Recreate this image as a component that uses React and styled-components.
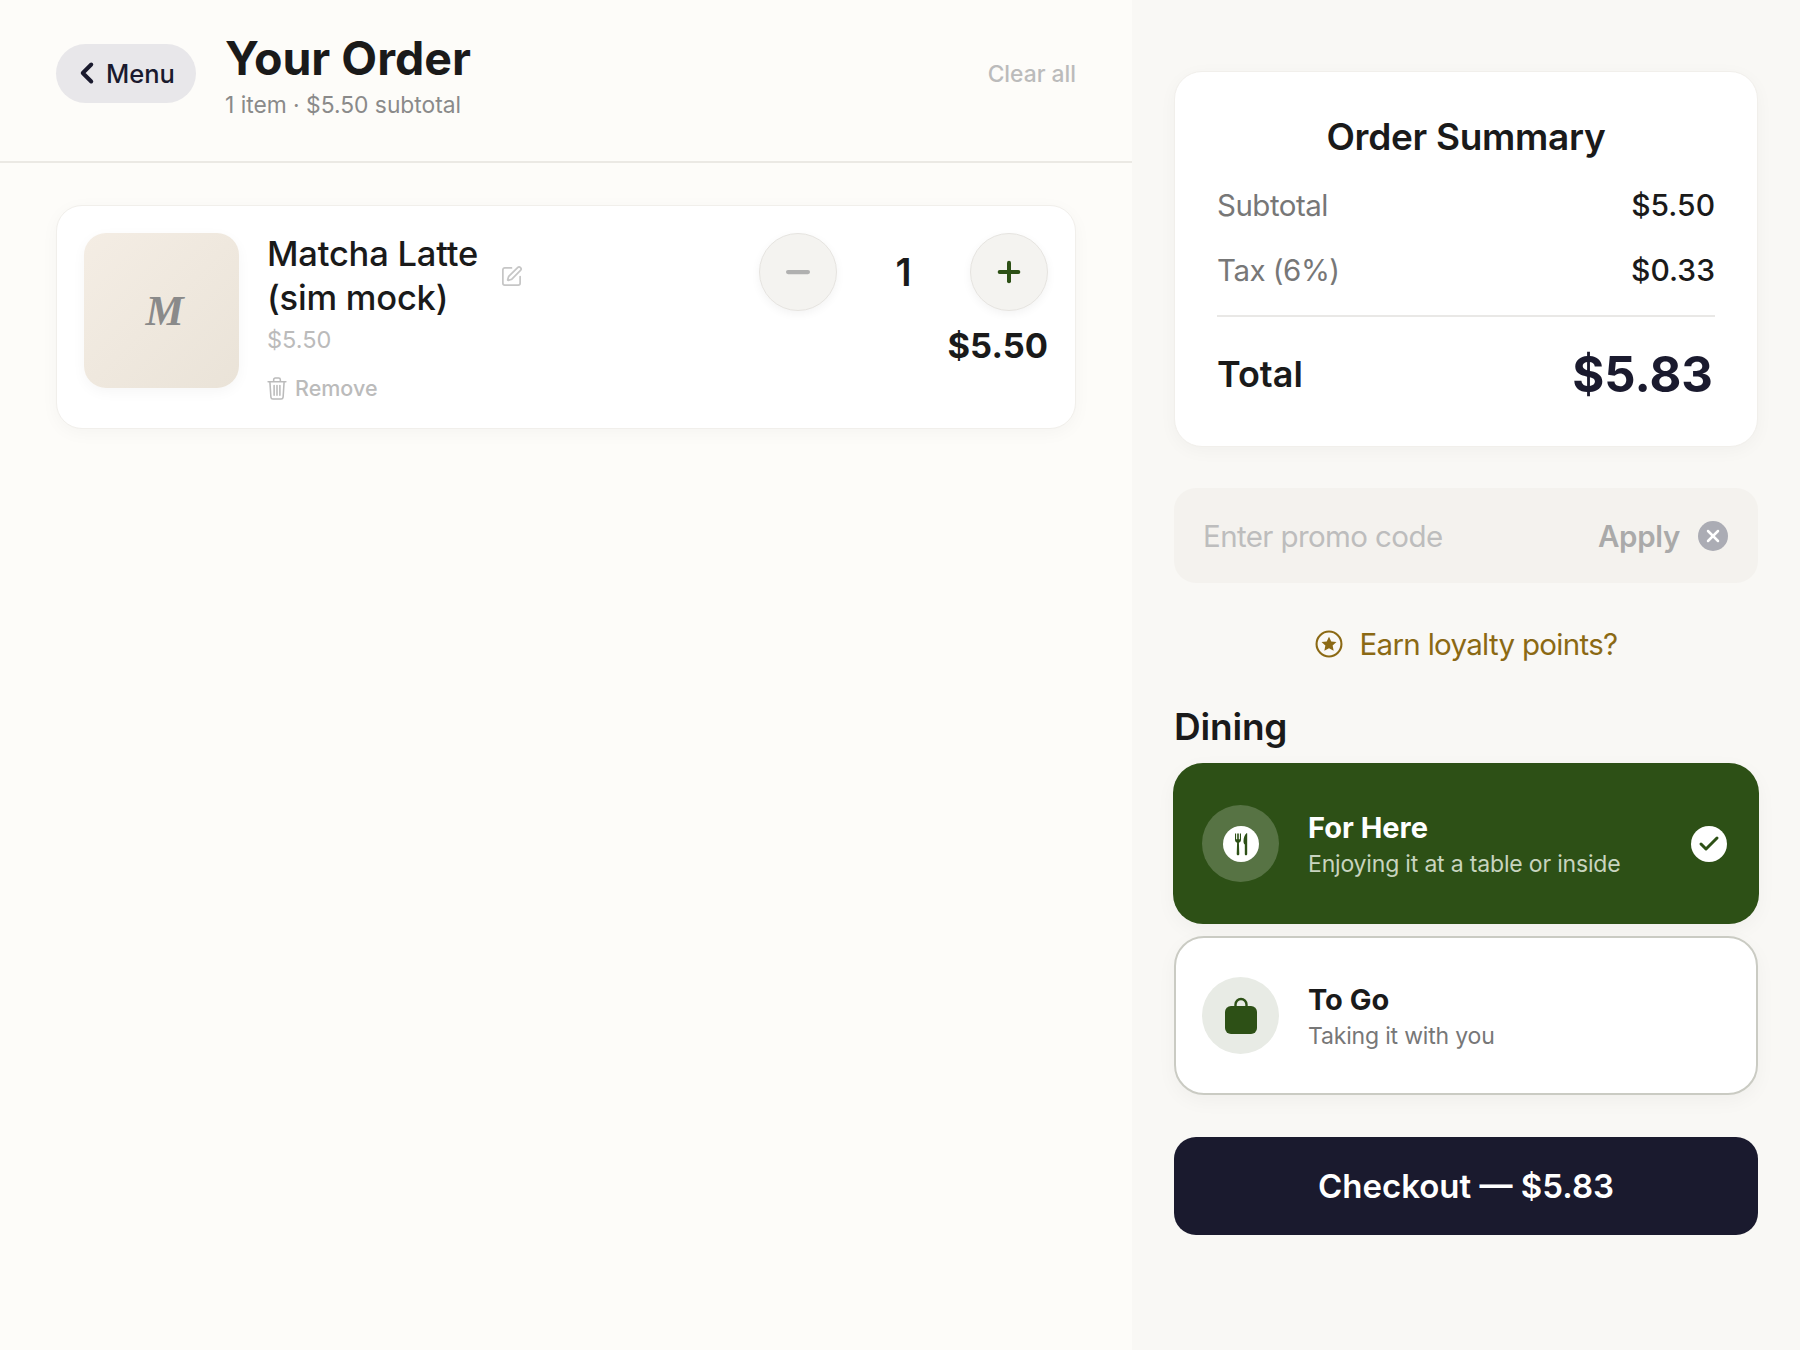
import React from 'react';
import styled, { createGlobalStyle } from 'styled-components';
import { ChevronLeft, SquarePen, Plus, Minus, X, Check } from 'lucide-react';

const Global = createGlobalStyle`
  html, body { margin: 0; padding: 0; background: #fdfcf9; }
  * { box-sizing: border-box; }
  body { font-family: Inter, "Noto Sans", "Liberation Sans", sans-serif; color: #1a1a1a; -webkit-font-smoothing: antialiased; }
`;

const Page = styled.div`
  display: flex;
  width: 1800px;
  height: 1350px;
  overflow: hidden;
`;
const Left = styled.main`
  width: 1132px;
  flex: none;
  background: #fdfcf9;
`;
const Header = styled.header`
  display: flex;
  align-items: center;
  height: 163px;
  padding: 0 56px 15px;
  border-bottom: 2px solid #ebe9e4;
`;
const BackPill = styled.button`
  display: flex;
  align-items: center;
  gap: 2px;
  width: 140px;
  height: 59px;
  padding: 0 0 0 14px;
  border: none;
  border-radius: 30px;
  background: #e8e7ea;
  color: #1a1a2e;
  font: 500 25.5px Inter, sans-serif;
`;
const TitleBlock = styled.div`
  flex: 1;
  margin: 4px 0 0 29px;
`;
const Title = styled.h1`
  margin: 0;
  font-size: 46.5px;
  font-weight: 700;
  line-height: 54px;
  color: #1a1a1a;
`;
const Sub = styled.div`
  margin-top: 6px;
  font-size: 22.8px;
  line-height: 28px;
  color: #8a8a8a;
`;
const ClearAll = styled.button`
  border: none;
  background: none;
  padding: 0;
  font: 500 22.8px Inter, sans-serif;
  color: #bbbbbb;
`;
const Body = styled.div`
  padding: 42px 56px;
`;
const ItemCard = styled.article`
  display: flex;
  height: 224px;
  padding: 27px;
  background: #fff;
  border: 1px solid #f1efeb;
  border-radius: 26px;
  box-shadow: 0 4px 18px rgba(0, 0, 0, 0.035);
`;
const Thumb = styled.div`
  display: flex;
  align-items: center;
  justify-content: center;
  width: 155px;
  height: 155px;
  flex: none;
  padding-left: 6px;
  border-radius: 22px;
  background: linear-gradient(135deg, #f4ede4, #eae3d8);
  box-shadow: 0 4px 14px rgba(0, 0, 0, 0.04);
  font: italic 700 43px "Liberation Serif", serif;
  color: #8a8a8a;
`;
const ItemInfo = styled.div`
  flex: 1;
  margin-left: 28px;
`;
const NameRow = styled.div`
  display: flex;
  align-items: center;
  gap: 22px;
  color: #c6c6c6;
`;
const Name = styled.div`
  font-size: 34.5px;
  font-weight: 500;
  line-height: 44px;
  letter-spacing: -0.2px;
  color: #1a1a1a;
  margin-top: -1px;
`;
const UnitPrice = styled.div`
  margin-top: 6px;
  font-size: 23.5px;
  line-height: 28px;
  color: #bbbbbb;
`;
const Remove = styled.button`
  display: flex;
  align-items: center;
  gap: 8px;
  margin-top: 21px;
  padding: 0;
  border: none;
  background: none;
  font: 500 21.5px Inter, sans-serif;
  color: #bbbbbb;
`;
const ItemSide = styled.div`
  display: flex;
  flex-direction: column;
  align-items: flex-end;
`;
const Stepper = styled.div`
  display: flex;
  align-items: center;
`;
const StepButton = styled.button`
  display: flex;
  align-items: center;
  justify-content: center;
  width: 78px;
  height: 78px;
  padding: 0;
  border: 1.5px solid #e6e4e0;
  border-radius: 50%;
  background: #f4f3f0;
  box-shadow: 0 3px 10px rgba(0, 0, 0, 0.05);
  color: ${p => (p.$active ? '#2d5016' : '#b0b0b0')};
`;
const Qty = styled.div`
  width: 133px;
  text-align: center;
  font-size: 38px;
  font-weight: 600;
`;
const LinePrice = styled.div`
  margin-top: 12px;
  font-size: 34.5px;
  font-weight: 700;
  line-height: 46px;
`;

const Right = styled.aside`
  flex: 1;
  padding: 71px 42px 0;
  background: #f9f8f5;
`;
const SummaryCard = styled.section`
  height: 376px;
  padding: 41px 42px 0;
  background: #fff;
  border: 1px solid #f1efeb;
  border-radius: 28px;
  box-shadow: 0 4px 18px rgba(0, 0, 0, 0.035);
`;
const SummaryTitle = styled.h2`
  margin: 0 0 12px;
  text-align: center;
  font-size: 37px;
  font-weight: 600;
  line-height: 48px;
  letter-spacing: -0.3px;
`;
const Row = styled.div`
  display: flex;
  justify-content: space-between;
  align-items: center;
  height: 64.5px;
  font-size: 29.5px;
  letter-spacing: -0.5px;
  color: #777777;
`;
const RowValue = styled.span`
  font-size: 30px;
  font-weight: 500;
  letter-spacing: 0;
  color: #1a1a1a;
`;
const Rule = styled.div`
  height: 2px;
  margin-top: 13px;
  background: #e9e8e6;
`;
const TotalRow = styled.div`
  display: flex;
  justify-content: space-between;
  align-items: center;
  height: 114px;
  padding-right: 2px;
  font-size: 36px;
  font-weight: 600;
`;
const TotalValue = styled.span`
  font-size: 49px;
  font-weight: 700;
  color: #1a1a2e;
`;
const Promo = styled.div`
  display: flex;
  align-items: center;
  height: 95px;
  margin-top: 41px;
  padding: 0 30px 0 29px;
  border-radius: 22px;
  background: #f4f2ee;
  font-size: 29.5px;
`;
const PromoInput = styled.span`
  flex: 1;
  letter-spacing: -0.6px;
  color: #bdbdbd;
`;
const Apply = styled.span`
  font-weight: 600;
  letter-spacing: -0.3px;
  color: #aaaaaa;
`;
const ClearCircle = styled.span`
  display: flex;
  align-items: center;
  justify-content: center;
  width: 30px;
  height: 30px;
  margin-left: 18px;
  border-radius: 50%;
  background: #abacb4;
  color: #fff;
`;
const Loyalty = styled.div`
  display: flex;
  align-items: center;
  justify-content: center;
  gap: 17px;
  height: 40px;
  margin-top: 41px;
  font-size: 29.5px;
  letter-spacing: -0.7px;
  color: #8b6914;
`;
const SectionTitle = styled.h3`
  margin: 40px 0 0;
  font-size: 37px;
  font-weight: 600;
  line-height: 46px;
  letter-spacing: -0.2px;
`;
const Option = styled.div`
  display: flex;
  align-items: center;
  height: ${p => (p.$selected ? '161px' : '159px')};
  margin: ${p => (p.$selected ? '13px -1px 0' : '12px 0 0')};
  padding: 0 ${p => (p.$selected ? '32px' : '34px')} 0 ${p => (p.$selected ? '29px' : '26px')};
  border-radius: 30px;
  border: ${p => (p.$selected ? 'none' : '2px solid #cacbc3')};
  background: ${p => (p.$selected ? '#2d5016' : '#fff')};
  box-shadow: 0 6px 20px rgba(0, 0, 0, 0.04);
`;
const OptionIcon = styled.div`
  display: flex;
  align-items: center;
  justify-content: center;
  width: 77px;
  height: 77px;
  flex: none;
  border-radius: 50%;
  background: ${p => (p.$selected ? 'rgba(255,255,255,0.2)' : '#e8ebe5')};
`;
const OptionText = styled.div`
  flex: 1;
  margin: 2px 0 0 29px;
`;
const OptionName = styled.div`
  font-size: 29px;
  font-weight: 700;
  line-height: 36px;
  color: ${p => (p.$selected ? '#fff' : '#1a1a1a')};
`;
const OptionSub = styled.div`
  margin-top: 3px;
  font-size: 23px;
  line-height: 30px;
  letter-spacing: -0.18px;
  color: ${p => (p.$selected ? '#c8d4bf' : '#777777')};
`;
const SelectedMark = styled.span`
  display: flex;
  align-items: center;
  justify-content: center;
  width: 36px;
  height: 36px;
  border-radius: 50%;
  background: #fff;
  color: #2d5016;
`;
const Checkout = styled.button`
  display: block;
  width: 100%;
  height: 98px;
  margin-top: 42px;
  border: none;
  border-radius: 22px;
  background: #1a1a2e;
  color: #fff;
  font: 600 33px Inter, sans-serif;
`;

const TrashIcon = () => (
  <svg width="20" height="23" viewBox="0 0 18 22" preserveAspectRatio="none" fill="none" stroke="currentColor" strokeWidth="1.4" strokeLinecap="round" strokeLinejoin="round">
    <path d="M1 4.500h16M6 4.500V2.600C6 1.700 6.600 1 7.500 1h3c.9 0 1.500.7 1.500 1.600v1.900" />
    <path d="M2.600 4.500l.9 14.700c.1 1 .8 1.800 1.800 1.800h7.400c1 0 1.700-.8 1.800-1.800l.9-14.700" />
    <path d="M6.400 8v9.500M9 8v9.500M11.600 8v9.500" />
  </svg>
);
const StarCircleIcon = () => (
  <svg width="28" height="28" viewBox="0 0 27 27">
    <circle cx="13.5" cy="13.5" r="12" fill="none" stroke="currentColor" strokeWidth="2" />
    <path d="M13.500 6.400l2.200 4.600 5 .6-3.700 3.400 1 5-4.500-2.500L9 20l1-5-3.700-3.400 5-.6z" fill="currentColor" />
  </svg>
);
const DineIcon = () => (
  <svg width="36" height="36" viewBox="0 0 36 36">
    <circle cx="18" cy="18" r="18" fill="#fff" />
    <path d="M12 7.500v6.300c0 1.500.9 2.600 2.100 3l-.4 11.200c0 .8.6 1.300 1.300 1.300s1.300-.5 1.300-1.300l-.4-11.200c1.200-.4 2.100-1.500 2.100-3V7.500h-1.100v5.800h-1.100V7.500h-1.600v5.800h-1.100V7.500z" fill="#2d5016" />
    <path d="M23.600 7.200c-1.900 1.400-3.100 4.400-3.100 8 0 1.600.4 2.800 1.300 3.400V28c0 .8.500 1.300 1.200 1.300s1.200-.5 1.200-1.300V7.600c0-.4-.3-.6-.6-.4z" fill="#2d5016" />
  </svg>
);
const BagIcon = () => (
  <svg width="32" height="37" viewBox="0 0 32 37">
    <path d="M10.500 11V7.500a5.500 5.500 0 0 1 11 0V11" fill="none" stroke="#2d5016" strokeWidth="2.400" />
    <rect x="0" y="9" width="32" height="28" rx="6" fill="#2d5016" />
  </svg>
);

export default function App() {
  return (
    <Page>
      <Global />
      <Left>
        <Header>
          <BackPill>
            <ChevronLeft size={34} strokeWidth={2.8} />
            Menu
          </BackPill>
          <TitleBlock>
            <Title>Your Order</Title>
            <Sub>1 item · $5.50 subtotal</Sub>
          </TitleBlock>
          <ClearAll>Clear all</ClearAll>
        </Header>
        <Body>
          <ItemCard>
            <Thumb>M</Thumb>
            <ItemInfo>
              <NameRow>
                <Name>Matcha Latte<br />(sim mock)</Name>
                <SquarePen size={23} strokeWidth={1.8} />
              </NameRow>
              <UnitPrice>$5.50</UnitPrice>
              <Remove><TrashIcon />Remove</Remove>
            </ItemInfo>
            <ItemSide>
              <Stepper>
                <StepButton><Minus size={34} strokeWidth={3} /></StepButton>
                <Qty>1</Qty>
                <StepButton $active><Plus size={32} strokeWidth={3} /></StepButton>
              </Stepper>
              <LinePrice>$5.50</LinePrice>
            </ItemSide>
          </ItemCard>
        </Body>
      </Left>
      <Right>
        <SummaryCard>
          <SummaryTitle>Order Summary</SummaryTitle>
          <Row>Subtotal<RowValue>$5.50</RowValue></Row>
          <Row>Tax (6%)<RowValue>$0.33</RowValue></Row>
          <Rule />
          <TotalRow>Total<TotalValue>$5.83</TotalValue></TotalRow>
        </SummaryCard>
        <Promo>
          <PromoInput>Enter promo code</PromoInput>
          <Apply>Apply</Apply>
          <ClearCircle><X size={20} strokeWidth={3} /></ClearCircle>
        </Promo>
        <Loyalty><StarCircleIcon />Earn loyalty points?</Loyalty>
        <SectionTitle>Dining</SectionTitle>
        <Option $selected>
          <OptionIcon $selected><DineIcon /></OptionIcon>
          <OptionText>
            <OptionName $selected>For Here</OptionName>
            <OptionSub $selected>Enjoying it at a table or inside</OptionSub>
          </OptionText>
          <SelectedMark><Check size={24} strokeWidth={3} /></SelectedMark>
        </Option>
        <Option>
          <OptionIcon><BagIcon /></OptionIcon>
          <OptionText>
            <OptionName>To Go</OptionName>
            <OptionSub>Taking it with you</OptionSub>
          </OptionText>
        </Option>
        <Checkout>Checkout — $5.83</Checkout>
      </Right>
    </Page>
  );
}
